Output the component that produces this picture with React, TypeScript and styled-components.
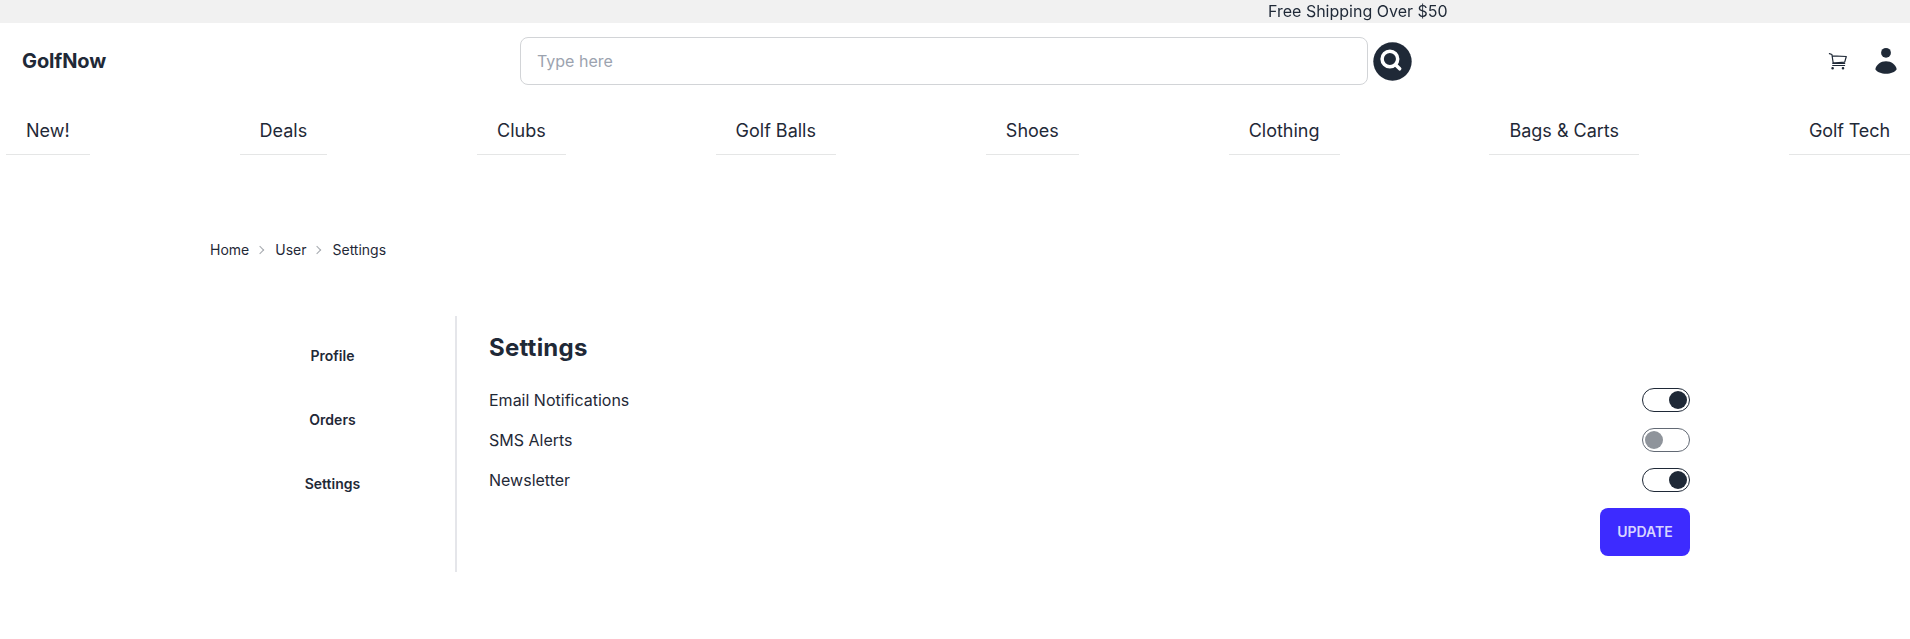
import React from "react";
import styled, { createGlobalStyle } from "styled-components";

const GlobalStyle = createGlobalStyle`
  *, *::before, *::after { box-sizing: border-box; }
  body {
    margin: 0;
    background: #fff;
    color: #1f2937;
    font-family: Inter, "Liberation Sans", sans-serif;
    font-size: 16px;
    line-height: 24px;
    overflow: hidden;
  }
`;

const Banner = styled.div`
  height: 23px;
  background: #f1f1f1;
  padding-left: 1268px;
  line-height: 23px;
  white-space: nowrap;
  overflow: hidden;
`;
const BannerText = styled.span`
  display: inline-block;
  will-change: transform;
`;

const Header = styled.header`
  height: 76px;
  display: flex;
  align-items: center;
  padding-left: 22px;
`;
const Logo = styled.a`
  width: 498px;
  font-size: 20px;
  font-weight: 700;
  line-height: 28px;
  letter-spacing: -0.12px;
`;
const Search = styled.form`
  display: flex;
  align-items: center;
  gap: 5px;
`;
const SearchInput = styled.input`
  width: 848px;
  height: 48px;
  padding: 0 16px;
  border: 1px solid #d2d4d7;
  border-radius: 8px;
  background: #fff;
  font: inherit;
  color: inherit;
  &::placeholder { color: #9ca3af; opacity: 1; }
`;
const SearchButton = styled.button`
  display: flex;
  padding: 0;
  border: 0;
  background: none;
`;
const Actions = styled.div`
  flex: 1;
  display: flex;
  justify-content: flex-end;
  align-items: center;
`;
const IconButton = styled.button`
  width: 48px;
  height: 48px;
  display: flex;
  align-items: center;
  justify-content: center;
  padding: 0;
  border: 0;
  background: none;
  color: #1f2937;
`;

const Nav = styled.nav`
  display: flex;
  justify-content: space-between;
  padding: 8px 0 0 6px;
`;
const NavItem = styled.a`
  height: 48px;
  padding: 0 20px;
  border-bottom: 1px solid #e5e6e6;
  font-size: 18px;
  line-height: 48px;
  white-space: nowrap;
  &:last-child { letter-spacing: -0.1px; }
`;

const Page = styled.main`
  padding: 85px 210px 0;
`;
const Breadcrumbs = styled.div`
  display: flex;
  align-items: center;
  height: 20px;
  font-size: 14px;
  line-height: 20px;
`;
const Chevron = styled.span`
  width: 6px;
  height: 6px;
  margin: 0 12px 0 8px;
  transform: rotate(45deg);
  border-top: 1px solid;
  border-right: 1px solid;
  opacity: 0.4;
`;
const Columns = styled.div`
  display: flex;
  height: 256px;
  margin-top: 56px;
`;
const Sidebar = styled.aside`
  width: 247px;
  padding: 8px 0;
  border-right: 2px solid #e5e6ea;
  display: flex;
  flex-direction: column;
`;
const SidebarLink = styled.a`
  height: 64px;
  font-size: 14px;
  font-weight: 600;
  line-height: 64px;
  text-align: center;
`;
const Panel = styled.section`
  flex: 1;
  display: flex;
  flex-direction: column;
  padding: 16px 10px 0 32px;
`;
const Title = styled.h1`
  margin: 0 0 16px;
  font-size: 24px;
  font-weight: 700;
  line-height: 32px;
  letter-spacing: 0.22px;
`;
const SettingRow = styled.label`
  height: 40px;
  display: flex;
  align-items: center;
  justify-content: space-between;
`;
const Toggle = styled.span<{ $on: boolean }>`
  display: flex;
  align-items: center;
  justify-content: ${(p) => (p.$on ? "flex-end" : "flex-start")};
  width: 48px;
  height: 24px;
  padding: 0 2px;
  border: 1px solid ${(p) => (p.$on ? "#1f2937" : "#626974")};
  border-radius: 12px;
  &::before {
    content: "";
    width: 18px;
    height: 18px;
    border-radius: 50%;
    background: ${(p) => (p.$on ? "#1f2937" : "#8f949b")};
  }
`;
const UpdateButton = styled.button`
  align-self: flex-end;
  width: 90px;
  height: 48px;
  margin-top: 8px;
  padding: 0;
  border: 0;
  border-radius: 8px;
  background: #3d2bff;
  color: #d8d5ff;
  font: 600 14px/14px Inter, "Liberation Sans", sans-serif;
`;

const SearchIcon = () => (
  <svg width="39" height="39" viewBox="0 0 39 39">
    <circle cx="19.500" cy="19.500" r="19.200" fill="#1f2937" />
    <g fill="none" stroke="#fff" strokeWidth="3.500" strokeLinecap="round">
      <circle cx="16.900" cy="17" r="7.800" />
      <path d="M22.800 22.900 26.700 26.800" />
    </g>
  </svg>
);

const CartIcon = () => (
  <svg width="20" height="20" viewBox="0 0 20 20" fill="none" stroke="currentColor" strokeWidth="1.200" strokeLinecap="round" strokeLinejoin="round">
    <path d="M1.400 2.600 3.900 3.500 5.200 12M4.200 4.800 18.300 5.500 16.700 11.200 4.900 12" />
    <path d="M4.800 12.300H16.700" />
    <path d="M4.700 14.500H16.600" />
    <circle cx="4.600" cy="17.200" r="0.700" fill="currentColor" />
    <circle cx="15" cy="17.200" r="0.700" fill="currentColor" />
  </svg>
);

const PersonIcon = () => (
  <svg width="24" height="28" viewBox="0 0 24 28" fill="currentColor">
    <circle cx="12" cy="5.800" r="4.900" />
    <path d="M1.300 22.300C2.300 17.600 6.600 14.300 12 14.300S21.700 17.600 22.700 22.300C20.900 25.200 16.800 26.800 12 26.800S3.100 25.200 1.300 22.300Z" />
  </svg>
);

const links = ["New!", "Deals", "Clubs", "Golf Balls", "Shoes", "Clothing", "Bags & Carts", "Golf Tech"];
const crumbs = ["Home", "User", "Settings"];
const account = ["Profile", "Orders", "Settings"];
const settings = [
  { label: "Email Notifications", on: true },
  { label: "SMS Alerts", on: false },
  { label: "Newsletter", on: true },
];

export default function App() {
  return (
    <>
      <GlobalStyle />
      <Banner><BannerText>Free Shipping Over $50</BannerText></Banner>
      <Header>
        <Logo>GolfNow</Logo>
        <Search>
          <SearchInput placeholder="Type here" />
          <SearchButton type="button" aria-label="Search"><SearchIcon /></SearchButton>
        </Search>
        <Actions>
          <IconButton aria-label="Cart"><CartIcon /></IconButton>
          <IconButton aria-label="Account"><PersonIcon /></IconButton>
        </Actions>
      </Header>
      <Nav>{links.map((l) => <NavItem key={l}>{l}</NavItem>)}</Nav>
      <Page>
        <Breadcrumbs>
          {crumbs.map((c, i) => (
            <React.Fragment key={c}>{i > 0 && <Chevron />}<span>{c}</span></React.Fragment>
          ))}
        </Breadcrumbs>
        <Columns>
          <Sidebar>
            {account.map((l) => <SidebarLink key={l}>{l}</SidebarLink>)}
          </Sidebar>
          <Panel>
            <Title>Settings</Title>
            {settings.map((s) => (
              <SettingRow key={s.label}>{s.label}<Toggle $on={s.on} /></SettingRow>
            ))}
            <UpdateButton>UPDATE</UpdateButton>
          </Panel>
        </Columns>
      </Page>
    </>
  );
}
